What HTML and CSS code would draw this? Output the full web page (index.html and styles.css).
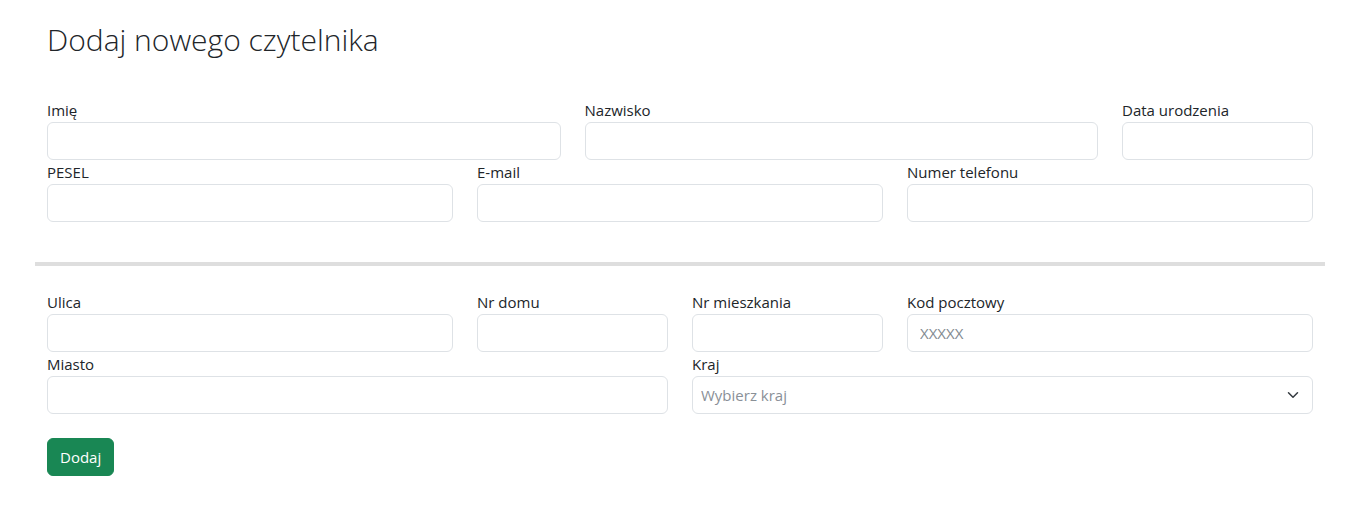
FILE: index.html
```html
<!DOCTYPE html>
<html lang="pl">
<head>
<meta charset="utf-8">
<title>Dodaj nowego czytelnika</title>
<link rel="stylesheet" href="styles.css">
</head>
<body>
<main class="page">
  <section class="block">
    <h2 class="title">Dodaj nowego czytelnika</h2>
    <form class="form">
      <div class="row">
        <div class="field span-5"><label>Imię</label><input class="control" type="text"></div>
        <div class="field span-5"><label>Nazwisko</label><input class="control" type="text"></div>
        <div class="field span-2"><label>Data urodzenia</label><input class="control" type="text"></div>
      </div>
      <div class="row">
        <div class="field span-4"><label>PESEL</label><input class="control" type="text"></div>
        <div class="field span-4"><label>E-mail</label><input class="control" type="text"></div>
        <div class="field span-4"><label>Numer telefonu</label><input class="control" type="text"></div>
      </div>
    </form>
  </section>
  <hr class="divider">
  <section class="block">
    <div class="row">
      <div class="field span-4"><label>Ulica</label><input class="control" type="text"></div>
      <div class="field span-2"><label>Nr domu</label><input class="control" type="text"></div>
      <div class="field span-2"><label>Nr mieszkania</label><input class="control" type="text"></div>
      <div class="field span-4"><label>Kod pocztowy</label><input class="control" type="text" placeholder="XXXXX"></div>
    </div>
    <div class="row">
      <div class="field span-6"><label>Miasto</label><input class="control" type="text"></div>
      <div class="field span-6"><label>Kraj</label>
        <div class="select-wrap">
          <select class="control select"><option>Wybierz kraj</option></select>
          <svg class="chevron" width="16" height="12" viewBox="0 0 16 16"><path d="m2 5 6 6 6-6" fill="none" stroke="#343a40" stroke-linecap="round" stroke-linejoin="round" stroke-width="2"/></svg>
        </div>
      </div>
    </div>
    <div class="actions"><button class="btn" type="button">Dodaj</button></div>
  </section>
</main>
</body>
</html>
```

FILE: styles.css
```css
* { box-sizing: border-box; }
html, body { margin: 0; background: #fff; }
body {
  font-family: "Open Sans", "Noto Sans", sans-serif;
  font-size: 15px;
  line-height: 24px;
  color: #212529;
}
.page {
  width: 1290px;
  margin-left: 35px;
  padding-top: 21px;
}
.block { padding: 0 12px; }
.title {
  margin: 0 0 39px;
  font-size: 30px;
  line-height: 38px;
  font-weight: 300;
}
.row {
  display: grid;
  grid-template-columns: repeat(12, 1fr);
  column-gap: 24px;
}
.span-2 { grid-column: span 2; }
.span-4 { grid-column: span 4; }
.span-5 { grid-column: span 5; }
.span-6 { grid-column: span 6; }
.field label { display: block; height: 24px; }
.control {
  display: block;
  width: 100%;
  height: 38px;
  padding: 6px 12px;
  font: inherit;
  color: #212529;
  background: #fff;
  border: 1px solid #dee2e6;
  border-radius: 6px;
  outline: none;
}
.control::placeholder { color: #6c757d; opacity: .85; }
.select-wrap { position: relative; }
.select {
  appearance: none;
  -webkit-appearance: none;
  color: #8a9097;
  padding-left: 8px;
  padding-right: 36px;
}
.chevron {
  position: absolute;
  right: 12px;
  top: 13px;
  pointer-events: none;
}
.divider {
  margin: 40px 0 24px;
  border: 0;
  height: 4px;
  background: #dedede;
}
.actions { margin-top: 24px; }
.btn {
  font: inherit;
  color: #fff;
  background: #198754;
  border: 1px solid #198754;
  border-radius: 6px;
  height: 38px;
  padding: 6px 12px;
}
```
